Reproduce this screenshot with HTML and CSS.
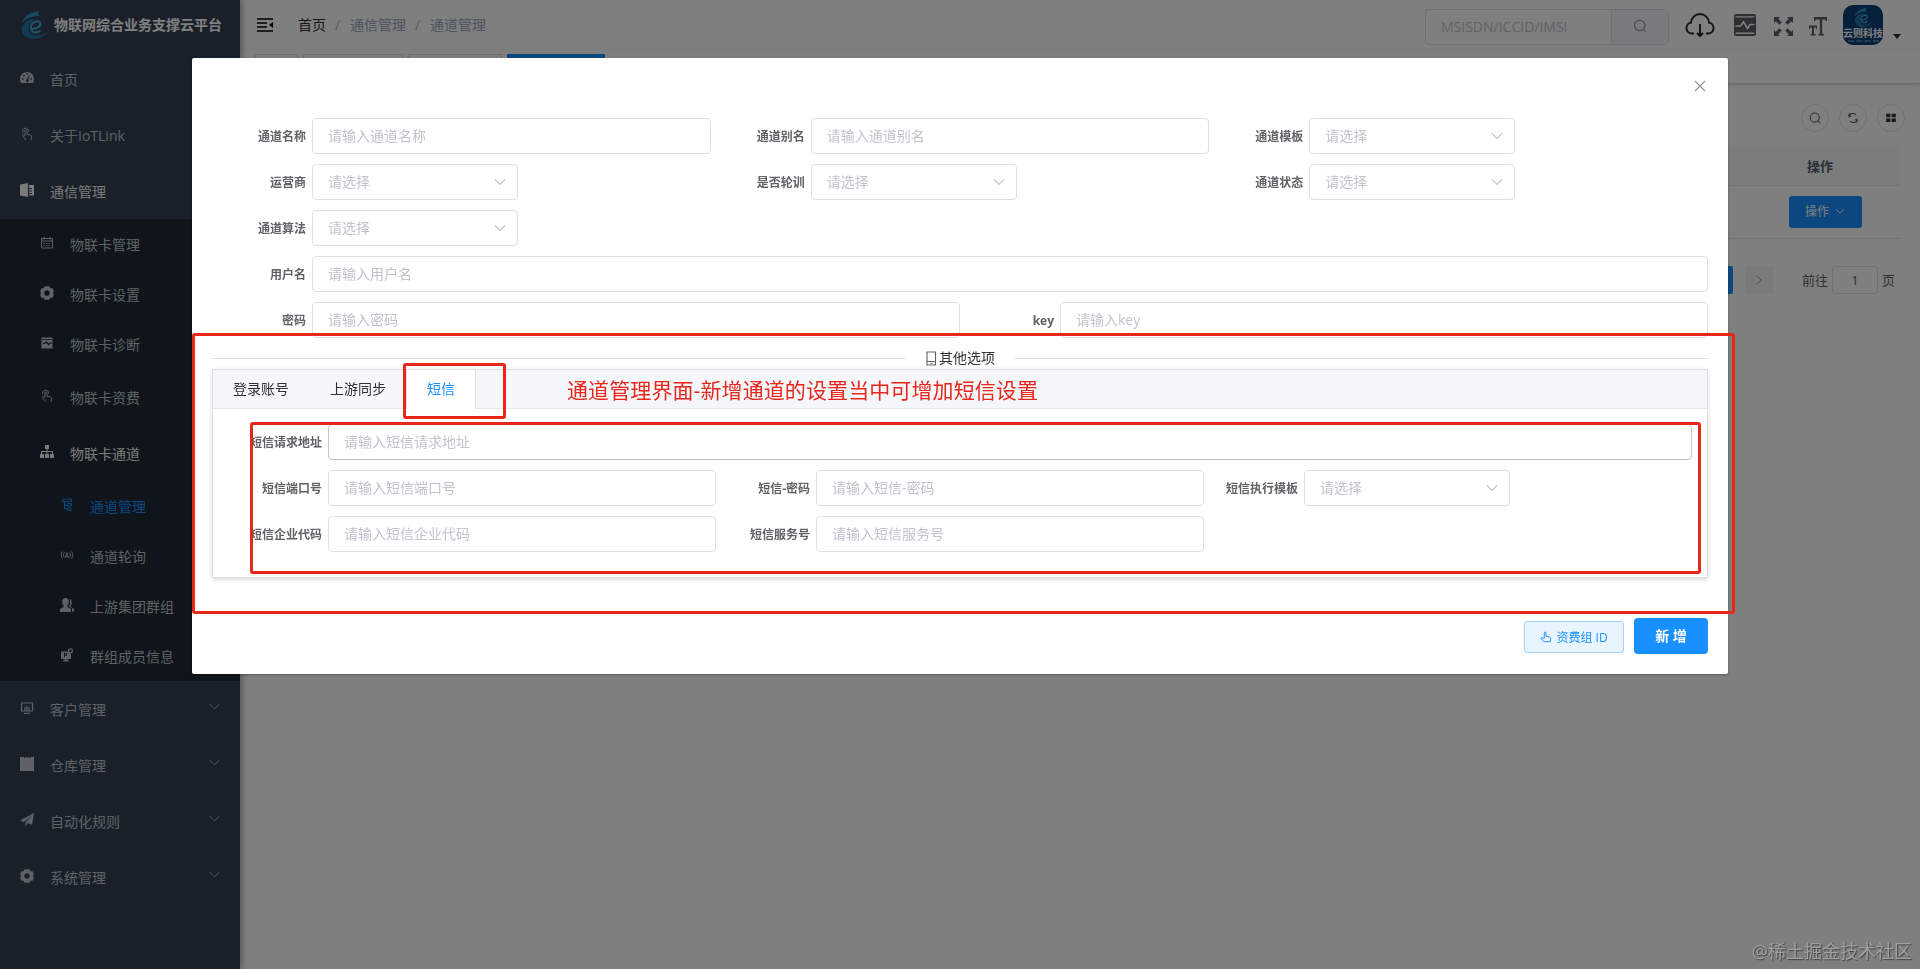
FILE: index.html
```
<!DOCTYPE html>
<html lang="zh-CN">

<head>
  <meta charset="UTF-8">
  <meta name="viewport" content="width=device-width, initial-scale=1.0">
  <title>物联网综合业务支撑云平台</title>
  <link rel="stylesheet" href="styles.css">
</head>

<body>
  <!-- shared icons -->
  <svg class="sprite" width="0" height="0">
    <symbol id="i-down" viewBox="0 0 14 14"><path d="M2 4.5l5 5 5-5" fill="none" stroke="currentColor" stroke-width="1.1" /></symbol>
    <symbol id="i-search" viewBox="0 0 16 16"><circle cx="7.7" cy="7.5" r="5.2" fill="none" stroke="currentColor" stroke-width="1.2" /><path d="M11.3 11.3l2.5 2.5" stroke="currentColor" stroke-width="1.2" /></symbol>
    <symbol id="i-touch" viewBox="0 0 14 14">
      <path d="M3 5.6A3 3 0 1 1 8.6 4.6M5 8.6V3.8a1 1 0 0 1 2 0v3.4l3.6.9c.8.2 1.1.8 1 1.5l-.6 3.6M5 8.4L3.4 7.6c-.8-.3-1.3.5-.8 1.1L6 13.2" fill="none" stroke="currentColor" stroke-width="1" />
    </symbol>
    <symbol id="i-gear" viewBox="0 0 14 14">
      <path fill="currentColor" fill-rule="evenodd" d="M4.500.3h5l.8 1.900 2-.2L14 5.200 12.800 7 14 8.800 12.300 12l-2-.2-.8 1.900h-5l-.8-1.900-2 .2L0 8.800 1.200 7 0 5.200 1.700 2l2 .2zM7 4.300a2.700 2.700 0 1 0 0 5.400 2.700 2.700 0 0 0 0-5.400z" />
    </symbol>
    <symbol id="i-monitor" viewBox="0 0 22 22">
      <path fill="currentColor" fill-rule="evenodd" d="M2 0h18a2 2 0 0 1 2 2v18a2 2 0 0 1-2 2H2a2 2 0 0 1-2-2V2a2 2 0 0 1 2-2zM1.600 2.200v1.400h18.800V2.200zM1.600 18.600V20h18.800v-1.400z" />
      <path d="M1.500 12h5l3-4 4 6.500 2.500-4h4.500" fill="none" stroke="#fff" stroke-width="1.600" />
    </symbol>
    <symbol id="i-swirl" viewBox="0 0 28 28">
      <path d="M19 0C12 1 4 4 2 12 6 7 12 5 19 5c-1-1-1-3 0-5z" fill="#2f93c4" />
      <path d="M12 8C4 10-1 18 4 24c5 6 17 5 24-3-7 4-15 5-18 1-3-5-1-10 5-14z" fill="#2678a8" />
      <path d="M10 17.500c5 1 10-1 10.500-4.500.3-3.500-6-4-9 .5-2 4 0 8 4 8 2 0 4-1 5-2" fill="none" stroke="#3fa9dd" stroke-width="2" />
    </symbol>
  </svg>

  <div class="app">
    <aside class="sidebar">
      <div class="logo">
        <svg class="logo-img"><use href="#i-swirl" /></svg>
        <h1>物联网综合业务支撑云平台</h1>
      </div>
      <ul class="menu">
        <li class="item">
          <svg class="icon" viewBox="0 0 14 14"><path fill="currentColor" fill-rule="evenodd" d="M0 8a7 7 0 0 1 14 0c0 1.700-.4 3-1 4H1C.4 11 0 9.700 0 8zM2 7.300v1.500h1.500V7.300zM3.500 3.800l-.2 1.500 1.400.2.200-1.500zM6.300 2.300v1.500h1.400V2.300zM10.500 7.300v1.500H12V7.300zM8.700 4.300l-1.500 4a1.400 1.400 0 1 0 1.100.4l1.500-4z" /></svg>
          <span>首页</span>
        </li>
        <li class="item"><svg class="icon"><use href="#i-touch" /></svg><span>关于IoTLink</span></li>
        <li class="item open">
          <svg class="icon" viewBox="0 0 14 14"><path fill="currentColor" d="M0 1.500L8 0v14l-8-1.500zM9 2h5v10.500H9v-1.500h3v-1H9V8.500h3v-1H9V6h3V5H9z" /></svg>
          <span>通信管理</span>
        </li>
      </ul>
      <ul class="menu submenu">
        <li class="item">
          <svg class="icon" viewBox="0 0 14 14"><g fill="none" stroke="currentColor"><path d="M1.500 2.500h11v9.500h-11zM1.500 5h11M4 1v2.500M10 1v2.500" /><path d="M3.500 7.500h7M3.500 9.700h7" stroke-dasharray="1.500 1" /></g></svg>
          <span>物联卡管理</span>
        </li>
        <li class="item"><svg class="icon"><use href="#i-gear" /></svg><span>物联卡设置</span></li>
        <li class="item">
          <svg class="icon" viewBox="0 0 14 14"><path fill="currentColor" fill-rule="evenodd" d="M1.500 1.500h11v11h-11zM2 3v.7h10V3z" /><path d="M3 7.500h2l1.500-1.500 2 2.500L10 7h2" fill="none" stroke="#1f2d3d" stroke-width="1.200" /></svg>
          <span>物联卡诊断</span>
        </li>
        <li class="item tall"><svg class="icon"><use href="#i-touch" /></svg><span>物联卡资费</span></li>
        <li class="item tall open">
          <svg class="icon" viewBox="0 0 14 14"><path fill="currentColor" d="M5 0h4v4H7.500v2H13v3h1v4h-4V9h2V7H7.500v2H9v4H5V9h1.500V7H2v2h2v4H0V9h1V6h5.500V4H5z" /></svg>
          <span>物联卡通道</span>
        </li>
        <li class="item deep current">
          <svg class="icon" viewBox="0 0 14 14"><path d="M2.500 1h9v2.500h-9zM4.500 3.500v7.500h3M4.500 7h2M7 5.500h4.500v2.500H7zM7.500 10h3.500v2.500H7.500z" fill="none" stroke="currentColor" /></svg>
          <span>通道管理</span>
        </li>
        <li class="item deep">
          <svg class="icon" viewBox="0 0 14 14"><path d="M2.500 3.500C.8 5.500.8 8.500 2.500 10.500M11.500 3.500c1.700 2 1.700 5 0 7M4.300 4.500c-1 1.500-1 3.500 0 5M9.700 4.500c1 1.500 1 3.500 0 5M5.500 10L7 4.500 8.500 10M6 8.300h2" fill="none" stroke="currentColor" stroke-width=".9" /></svg>
          <span>通道轮询</span>
        </li>
        <li class="item deep">
          <svg class="icon" viewBox="0 0 14 14"><path fill="currentColor" d="M5.500 0C7.500 0 9 1.500 8.800 4c-.1 1.500-.6 2.600-1.300 3.300V9L11 11v3H0v-3l3.500-2V7.300C2.800 6.600 2.300 5.500 2.200 4 2 1.500 3.500 0 5.500 0zM9.500 1c2.500.5 3 4.500 1.300 6.500V9l3.200 2v2.500h-2v-3L9 8.500C10.300 6.500 10.500 3 9.500 1z" /></svg>
          <span>上游集团群组</span>
        </li>
        <li class="item deep">
          <svg class="icon" viewBox="0 0 14 14"><path fill="currentColor" fill-rule="evenodd" d="M1 3.500h6.500a3 3 0 0 0 3.500 2V11H7.500v1.500H9v1H3v-1h1.500V11H1zM4 5v4h1V7.700h2V5zM5 5.800h1V7H5z" /><circle cx="10.500" cy="2.800" r="2" fill="none" stroke="currentColor" stroke-width="1.300" /></svg>
          <span>群组成员信息</span>
        </li>
      </ul>
      <ul class="menu">
        <li class="item">
          <svg class="icon" viewBox="0 0 14 14"><path d="M1.500 2h11v8h-11zM4 12.300h6M5 6v4M7 5v5M9 6v4" fill="none" stroke="currentColor" stroke-width="1.200" /></svg>
          <span>客户管理</span><svg class="arrow"><use href="#i-down" /></svg>
        </li>
        <li class="item">
          <svg class="icon" viewBox="0 0 14 14"><path fill="currentColor" d="M0 0h4v1h1V0h1.500v1h1V0H9v1h1.500V0H14v14H0z" /></svg>
          <span>仓库管理</span><svg class="arrow"><use href="#i-down" /></svg>
        </li>
        <li class="item">
          <svg class="icon" viewBox="0 0 14 14"><path fill="currentColor" d="M14 0l-2 12-4-2-2.500 3.500V9.500L12 2.500 4 9 0 7.500z" /></svg>
          <span>自动化规则</span><svg class="arrow"><use href="#i-down" /></svg>
        </li>
        <li class="item">
          <svg class="icon"><use href="#i-gear" /></svg>
          <span>系统管理</span><svg class="arrow"><use href="#i-down" /></svg>
        </li>
      </ul>
    </aside>

    <main class="main">
      <header class="navbar">
        <svg class="hamburger" viewBox="0 0 16 14"><path d="M0 1h16M0 5h10M0 9h10M0 13h16" stroke="#000" stroke-width="1.500" /><path d="M16 4v6l-4-3z" /></svg>
        <nav class="breadcrumb">
          <span class="home">首页</span><i>/</i><span>通信管理</span><i>/</i><span>通道管理</span>
        </nav>
        <div class="tools">
          <div class="search">
            <input type="text" placeholder="MSISDN/ICCID/IMSI">
            <button type="button"><svg width="16" height="16"><use href="#i-search" /></svg></button>
          </div>
          <svg class="cloud" viewBox="0 0 30 24"><path d="M9 20.500H6.500A5.500 5.500 0 0 1 6 9.600C6.500 4.500 10.500 1 15 1s8.500 3.500 9 8.600a5.500 5.500 0 0 1-.5 10.900H21M15 11v12M12 20l3 3 3-3" fill="none" stroke="#222" stroke-width="1.900" /></svg>
          <svg class="monitor"><use href="#i-monitor" /></svg>
          <svg class="full" viewBox="0 0 19 19"><path fill="#5a5e66" d="M0 0h6L4.200 1.800l3.600 3.600-2.400 2.400-3.600-3.600L0 6zM19 0v6l-1.800-1.800-3.600 3.600-2.400-2.400 3.600-3.600L13 0zM0 19v-6l1.800 1.800 3.600-3.600 2.400 2.400-3.600 3.600L6 19zM19 19h-6l1.800-1.800-3.600-3.600 2.400-2.400 3.600 3.600L19 13z" /></svg>
          <svg class="size" viewBox="0 0 18 19"><path fill="#5a5e66" d="M5 0h13v4h-1.500V2.500h-3.300V17H15v1.500H9.500V17h1.300V2.500H6.500V4H5zM0 8.500h8V12H7v-1.500H5V17h1.500v1.500h-5V17H3v-6.500H1V12H0z" /></svg>
          <div class="avatar">
            <svg><use href="#i-swirl" /></svg>
            <b>云则科技</b>
            <i></i>
          </div>
          <span class="caret"></span>
        </div>
      </header>
      <div class="tags">
        <span class="tag w1"></span><span class="tag w2"></span><span class="tag w3"></span><span class="tag w4 active"></span>
      </div>
      <section class="content">
        <div class="toolbar">
          <span class="round"><svg><use href="#i-search" /></svg></span>
          <span class="round"><svg viewBox="0 0 16 16"><path d="M3 7.500a5 5 0 0 1 8.500-3.200M5 2.500l-2 2.300 2.500 1.500M13 8.500a5 5 0 0 1-8.500 3.200M11 13.500l2-2.300-2.500-1.500" fill="none" stroke="currentColor" stroke-width="1.200" /></svg></span>
          <span class="round"><svg viewBox="0 0 16 16"><path fill="#303133" d="M2.500 3h4.800v4H2.500zM8.700 3h4.800v4H8.700zM2.500 8.700h4.800v4H2.500zM8.700 8.700h4.800v4H8.700z" /></svg></span>
        </div>
        <div class="table">
          <div class="tr th"><div class="cell">操作</div></div>
          <div class="tr"><div class="cell"><button type="button" class="op">操作<svg><use href="#i-down" /></svg></button></div></div>
        </div>
        <div class="pagination">
          <span class="page"></span>
          <span class="next"><svg><use href="#i-down" /></svg></span>
          <span class="jump">前往</span>
          <span class="num">1</span>
          <span class="jump">页</span>
        </div>
      </section>
    </main>
  </div>

  <div class="mask">
    <div class="dialog">
      <svg class="close" viewBox="0 0 12 12"><path d="M1 1l10 10M11 1L1 11" stroke="#909399" stroke-width="1.100" /></svg>
      <form class="form">
        <div class="row thirds">
          <div class="field"><label>通道名称</label><input type="text" placeholder="请输入通道名称"></div>
          <div class="field"><label>通道别名</label><input type="text" placeholder="请输入通道别名"></div>
          <div class="field"><label>通道模板</label><div class="select">请选择<svg><use href="#i-down" /></svg></div></div>
          <div class="field"><label>运营商</label><div class="select">请选择<svg><use href="#i-down" /></svg></div></div>
          <div class="field"><label>是否轮训</label><div class="select">请选择<svg><use href="#i-down" /></svg></div></div>
          <div class="field"><label>通道状态</label><div class="select">请选择<svg><use href="#i-down" /></svg></div></div>
          <div class="field"><label>通道算法</label><div class="select">请选择<svg><use href="#i-down" /></svg></div></div>
        </div>
        <div class="row">
          <div class="field"><label>用户名</label><input type="text" placeholder="请输入用户名"></div>
        </div>
        <div class="row halves">
          <div class="field"><label>密码</label><input type="text" placeholder="请输入密码"></div>
          <div class="field"><label>key</label><input type="text" placeholder="请输入key"></div>
        </div>

        <div class="divider">
          <span><svg viewBox="0 0 12 15"><path d="M2 1h8.500v13H2zM2 10.500h8.500M5.300 12.300h2" fill="none" stroke="#606266" stroke-width="1.100" /></svg>其他选项</span>
        </div>

        <div class="tabs">
          <div class="tabs-head">
            <span class="tab">登录账号</span>
            <span class="tab">上游同步</span>
            <span class="tab active">短信</span>
          </div>
          <div class="tabs-body">
            <div class="row">
              <div class="field"><label>短信请求地址</label><input type="text" class="hover" placeholder="请输入短信请求地址"></div>
            </div>
            <div class="row thirds">
              <div class="field"><label>短信端口号</label><input type="text" placeholder="请输入短信端口号"></div>
              <div class="field"><label>短信-密码</label><input type="text" placeholder="请输入短信-密码"></div>
              <div class="field"><label>短信执行模板</label><div class="select">请选择<svg><use href="#i-down" /></svg></div></div>
              <div class="field"><label>短信企业代码</label><input type="text" placeholder="请输入短信企业代码"></div>
              <div class="field"><label>短信服务号</label><input type="text" placeholder="请输入短信服务号"></div>
            </div>
          </div>
        </div>
      </form>
      <div class="dialog-foot">
        <button type="button" class="btn-plain"><svg viewBox="0 0 14 14"><path d="M5 8.500V2.300a1 1 0 0 1 2 0v4l4.500.8c.8.200 1 .8 1 1.400L12 12.500H4.500L1.300 8.700C1 8 1.500 7.300 2.500 7.600L5 9" fill="none" stroke="currentColor" stroke-width="1.100" /></svg>资费组 ID</button>
        <button type="button" class="btn-primary">新 增</button>
      </div>
    </div>
  </div>

  <!-- annotations over the dialog -->
  <div class="mark mark-section"></div>
  <div class="mark mark-tab"></div>
  <div class="mark mark-fields"></div>
  <p class="note">通道管理界面-新增通道的设置当中可增加短信设置</p>
  <div class="watermark">@稀土掘金技术社区</div>
</body>

</html>
```

FILE: styles.css
```
* {
  box-sizing: border-box;
}

body {
  margin: 0;
  height: 100vh;
  overflow: hidden;
  background: #fff;
  color: #303133;
  font-family: "Open Sans", "Noto Sans CJK SC", sans-serif;
  font-size: 14px;
}

ul {
  list-style: none;
  margin: 0;
  padding: 0;
}

svg {
  flex: none;
}

i {
  font-style: normal;
}

input,
button {
  font-family: inherit;
  outline: none;
}

.sprite {
  position: absolute;
}

.app {
  display: flex;
  height: 100vh;
}

/* sidebar */
.sidebar {
  width: 240px;
  flex: none;
  background: #334054;
  color: #bcc4ce;
  box-shadow: 2px 0 6px rgba(0, 21, 41, .35);
  z-index: 1;
}

.logo {
  display: flex;
  align-items: center;
  height: 51px;
  padding: 0 0 2px 20px;
  gap: 6px;
}

.logo-img {
  width: 28px;
  height: 28px;
}

.logo h1 {
  margin: 0;
  font-size: 14px;
  line-height: 20px;
  font-weight: 700;
  color: #fff;
}

.item {
  display: flex;
  align-items: center;
  height: 56px;
  padding: 0 20px;
  gap: 16px;
}

.icon {
  width: 14px;
  height: 14px;
  margin-top: -2px;
}

.arrow {
  width: 13px;
  height: 13px;
  margin: -5px -1px 0 auto;
  opacity: .6;
}

.submenu {
  background: #1e2a34;
}

.submenu .item {
  height: 50px;
  padding-left: 40px;
}

.submenu .tall {
  height: 56px;
}

.submenu .deep {
  padding-left: 60px;
}

.item.open {
  color: #f4f4f5;
}

.submenu .item.current {
  color: #1890ff;
}

/* top bar */
.main {
  flex: 1;
  min-width: 0;
}

.navbar {
  display: flex;
  align-items: center;
  height: 50px;
  padding: 0 19px 0 17px;
}

.hamburger {
  width: 16px;
  height: 14px;
}

.breadcrumb {
  display: flex;
  gap: 9px;
  margin-left: 25px;
  color: #97a8be;
  line-height: 20px;
}

.breadcrumb .home {
  color: #303133;
}

.breadcrumb i {
  width: 6px;
  color: #b0b4bc;
}

.tools {
  display: flex;
  align-items: center;
  margin-left: auto;
}

.search {
  display: flex;
  width: 244px;
  height: 36px;
  margin: 4px 16px 0 0;
  border: 1px solid #dcdfe6;
  border-radius: 4px;
}

.search input {
  flex: 1;
  min-width: 0;
  border: 0;
  padding: 0 15px 2px;
  font-size: 14px;
  background: transparent;
}

.search button {
  width: 57px;
  border: 0;
  border-left: 1px solid #dcdfe6;
  background: #f5f7fa;
  color: #909399;
  padding: 2px 0 0;
}

.cloud {
  width: 30px;
  height: 24px;
  margin-right: 19px;
}

.monitor {
  width: 22px;
  height: 22px;
  margin-right: 18px;
  color: #5a5e66;
}

.full {
  width: 19px;
  height: 19px;
  margin: 2px 16px 0 0;
}

.size {
  width: 18px;
  height: 19px;
  margin: 2px 16px 0 0;
}

.avatar {
  display: flex;
  flex-direction: column;
  align-items: center;
  width: 40px;
  height: 40px;
  padding-top: 3px;
  border-radius: 10px;
  background: #0d3f74;
  color: #fff;
  overflow: hidden;
}

.avatar svg {
  width: 20px;
  height: 19px;
}

.avatar b {
  font-size: 10px;
  line-height: 12px;
  white-space: nowrap;
}

.avatar i {
  width: 31px;
  margin-top: 1px;
  border-top: 2px dashed #467aa0;
}

.caret {
  margin: 22px 0 0 10px;
  border: 4px solid transparent;
  border-top: 5px solid #303133;
  border-bottom: 0;
}

.tags {
  display: flex;
  gap: 5px;
  height: 34px;
  padding: 4px 15px;
  border-bottom: 1px solid #d8dce5;
  box-shadow: 0 1px 3px 0 rgba(0, 0, 0, .12), 0 0 3px 0 rgba(0, 0, 0, .04);
}

.tag {
  height: 26px;
  border: 1px solid #d8dce5;
}

.w1 {
  width: 43px;
}

.w2 {
  width: 100px;
}

.w3 {
  width: 94px;
}

.w4 {
  width: 98px;
}

.tag.active {
  background: #1890ff;
  border-color: #1890ff;
}

/* table page */
.content {
  padding: 20px 20px 0;
}

.toolbar {
  display: flex;
  justify-content: flex-end;
  gap: 10px;
  margin-right: -5px;
}

.round {
  display: flex;
  align-items: center;
  justify-content: center;
  width: 28px;
  height: 28px;
  border: 1px solid #dcdfe6;
  border-radius: 50%;
  color: #606266;
}

.round svg {
  width: 14px;
  height: 14px;
}

.table {
  margin-top: 13px;
}

.tr {
  display: flex;
  justify-content: flex-end;
  height: 53px;
  border-bottom: 1px solid #dfe6ec;
}

.th {
  height: 41px;
  background: #f8f8f9;
  color: #515a6e;
  font-size: 13px;
  font-weight: 700;
}

.cell {
  display: flex;
  align-items: center;
  justify-content: center;
  width: 160px;
}

.tr:not(.th) .cell {
  width: 149px;
}

.op {
  display: flex;
  align-items: center;
  justify-content: center;
  gap: 5px;
  width: 73px;
  height: 32px;
  border: 0;
  border-radius: 3px;
  padding: 0 6px 2px;
  background: #1890ff;
  color: #fff;
  font-size: 12px;
}

.op svg {
  width: 12px;
  height: 12px;
}

.pagination {
  display: flex;
  align-items: center;
  justify-content: flex-end;
  height: 28px;
  margin-top: 27px;
  padding-right: 5px;
  color: #606266;
  font-size: 13px;
}

.jump {
  padding-bottom: 2px;
}

.page {
  width: 30px;
  height: 28px;
  border-radius: 2px;
  background: #1890ff;
}

.next {
  display: flex;
  align-items: center;
  justify-content: center;
  width: 28px;
  height: 28px;
  margin: 0 29px 0 12px;
  background: #f4f4f5;
  color: #909399;
}

.next svg {
  width: 12px;
  height: 12px;
  transform: rotate(-90deg);
}

.num {
  width: 46px;
  height: 28px;
  margin: 0 4px;
  border: 1px solid #dcdfe6;
  border-radius: 3px;
  line-height: 26px;
  text-align: center;
}

/* dialog */
.mask {
  position: fixed;
  inset: 0;
  z-index: 10;
  background: rgba(0, 0, 0, .5);
}

.dialog {
  position: relative;
  width: 80%;
  height: 616px;
  margin: 58px auto 0;
  padding: 60px 20px 0;
  background: #fff;
  border-radius: 2px;
  box-shadow: 0 1px 3px rgba(0, 0, 0, .3);
}

.close {
  position: absolute;
  top: 22px;
  right: 22px;
  width: 12px;
  height: 12px;
}

.row {
  display: grid;
  row-gap: 10px;
  margin-bottom: 10px;
}

.thirds {
  grid-template-columns: repeat(3, 1fr);
}

.halves {
  grid-template-columns: repeat(2, 1fr);
}

.field {
  display: flex;
  height: 36px;
}

.field label {
  width: 100px;
  flex: none;
  padding-right: 6px;
  color: #606266;
  font-size: 12px;
  font-weight: 700;
  line-height: 37px;
  text-align: right;
}

.field input {
  flex: 1;
  min-width: 0;
  border: 1px solid #dcdfe6;
  border-radius: 4px;
  padding: 0 15px 2px;
  font-size: 14px;
}

.field input.hover {
  border-color: #c0c4cc;
}

::placeholder {
  color: #c0c4cc;
}

.select {
  display: flex;
  align-items: center;
  justify-content: space-between;
  width: 206px;
  height: 36px;
  border: 1px solid #dcdfe6;
  border-radius: 4px;
  padding: 0 10px 2px 15px;
  color: #c0c4cc;
}

.select svg {
  width: 14px;
  height: 14px;
  margin-top: 2px;
}

.divider {
  display: flex;
  align-items: center;
  height: 20px;
  line-height: 20px;
}

.divider::before,
.divider::after {
  content: "";
  flex: 1;
  height: 1px;
  background: #dcdfe6;
}

.divider span {
  display: flex;
  align-items: center;
  padding: 0 20px;
}

.divider svg {
  width: 12px;
  height: 15px;
  margin-right: 2px;
}

.tabs {
  margin-top: 1px;
  background: #fff;
  border: 1px solid #dcdfe6;
  box-shadow: 0 2px 4px 0 rgba(0, 0, 0, .12), 0 0 6px 0 rgba(0, 0, 0, .04);
}

.tabs-head {
  display: flex;
  height: 39px;
  background: #f5f7fa;
  border-bottom: 1px solid #e4e7ed;
}

.tab {
  height: 39px;
  margin-left: -1px;
  padding: 0 20px;
  border: 1px solid transparent;
  border-width: 0 1px;
  line-height: 38px;
}

.tab.active {
  background: #fff;
  border-color: #dcdfe6;
  color: #1890ff;
}

.tabs-body {
  padding: 15px;
}

.dialog-foot {
  display: flex;
  align-items: center;
  justify-content: flex-end;
  gap: 10px;
  margin-top: 40px;
}

.btn-plain {
  display: flex;
  align-items: center;
  justify-content: center;
  gap: 4px;
  width: 100px;
  height: 32px;
  margin-top: 2px;
  border: 1px solid #a3d3ff;
  border-radius: 3px;
  background: #e8f4ff;
  color: #1890ff;
  font-size: 12px;
  padding: 0 0 1px;
}

.btn-plain svg {
  width: 12px;
  height: 12px;
}

.btn-primary {
  width: 74px;
  height: 36px;
  border: 0;
  border-radius: 4px;
  background: #1890ff;
  color: #fff;
  font-size: 14px;
  font-weight: 700;
  padding: 0 0 2px;
}

/* annotations */
.mark {
  position: absolute;
  z-index: 20;
  border: 3px solid #e8261b;
  border-radius: 3px;
}

.mark-section {
  left: 192px;
  top: 333px;
  width: 1543px;
  height: 281px;
}

.mark-tab {
  left: 403px;
  top: 363px;
  width: 103px;
  height: 56px;
}

.mark-fields {
  left: 250px;
  top: 422px;
  width: 1451px;
  height: 152px;
}

.note {
  position: absolute;
  z-index: 20;
  left: 567px;
  top: 375px;
  margin: 0;
  color: #e8261b;
  font-size: 21px;
  letter-spacing: .1px;
  line-height: 30px;
}

.watermark {
  position: absolute;
  z-index: 20;
  right: 8px;
  bottom: 5px;
  color: #a0a0a0;
  font-size: 18px;
  line-height: 26px;
  text-shadow: 1px 1px 1px #444;
}
```
